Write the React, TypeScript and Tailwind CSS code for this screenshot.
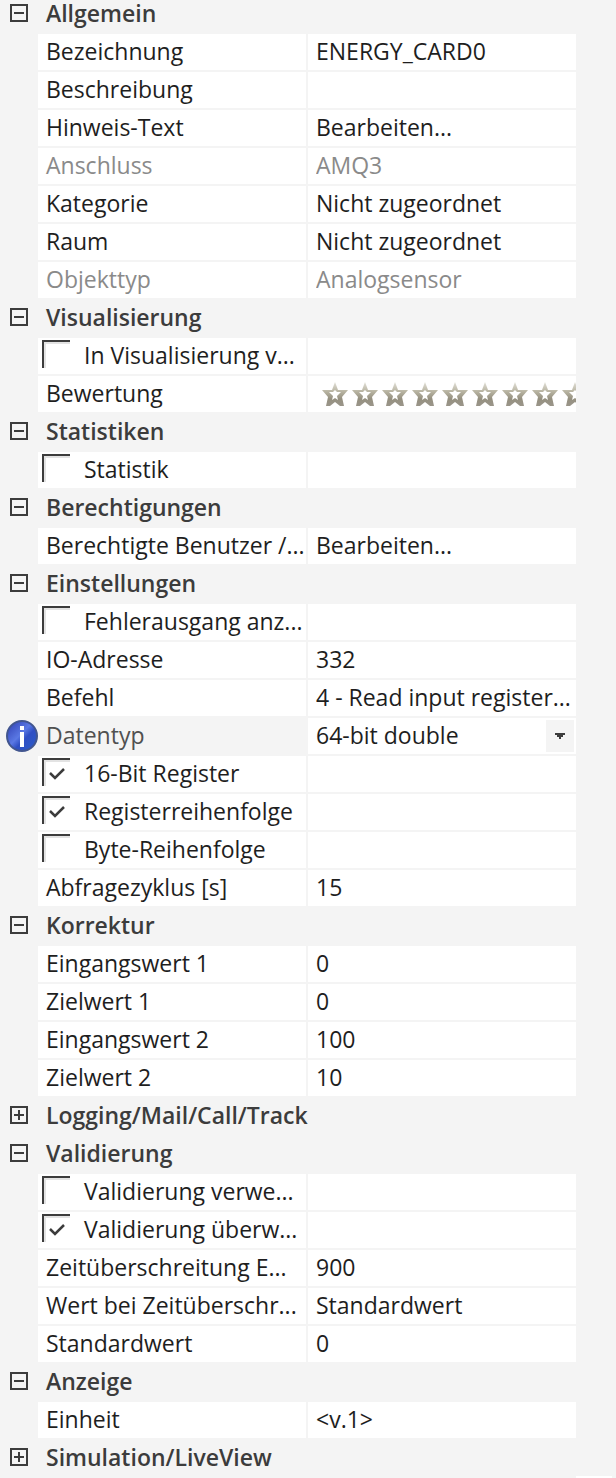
import { useState } from 'react';
import type { ReactNode } from 'react';

type Row = {
  label: string;
  value?: string;
  kind?: 'text' | 'button' | 'select' | 'check' | 'rating';
  checked?: boolean;
  disabled?: boolean;
  active?: boolean;
};

type Section = { title: string; open: boolean; rows: Row[] };

const sections: Section[] = [
  {
    title: 'Allgemein',
    open: true,
    rows: [
      { label: 'Bezeichnung', value: 'ENERGY_CARD0' },
      { label: 'Beschreibung', value: '' },
      { label: 'Hinweis-Text', value: 'Bearbeiten...', kind: 'button' },
      { label: 'Anschluss', value: 'AMQ3', disabled: true },
      { label: 'Kategorie', value: 'Nicht zugeordnet', kind: 'select' },
      { label: 'Raum', value: 'Nicht zugeordnet', kind: 'select' },
      { label: 'Objekttyp', value: 'Analogsensor', disabled: true },
    ],
  },
  {
    title: 'Visualisierung',
    open: true,
    rows: [
      { label: 'In Visualisierung v...', kind: 'check' },
      { label: 'Bewertung', kind: 'rating' },
    ],
  },
  {
    title: 'Statistiken',
    open: true,
    rows: [{ label: 'Statistik', kind: 'check' }],
  },
  {
    title: 'Berechtigungen',
    open: true,
    rows: [{ label: 'Berechtigte Benutzer /...', value: 'Bearbeiten...', kind: 'button' }],
  },
  {
    title: 'Einstellungen',
    open: true,
    rows: [
      { label: 'Fehlerausgang anz...', kind: 'check' },
      { label: 'IO-Adresse', value: '332' },
      { label: 'Befehl', value: '4 - Read input register...', kind: 'select' },
      { label: 'Datentyp', value: '64-bit double', kind: 'select', active: true },
      { label: '16-Bit Register', kind: 'check', checked: true },
      { label: 'Registerreihenfolge', kind: 'check', checked: true },
      { label: 'Byte-Reihenfolge', kind: 'check' },
      { label: 'Abfragezyklus [s]', value: '15' },
    ],
  },
  {
    title: 'Korrektur',
    open: true,
    rows: [
      { label: 'Eingangswert 1', value: '0' },
      { label: 'Zielwert 1', value: '0' },
      { label: 'Eingangswert 2', value: '100' },
      { label: 'Zielwert 2', value: '10' },
    ],
  },
  { title: 'Logging/Mail/Call/Track', open: false, rows: [] },
  {
    title: 'Validierung',
    open: true,
    rows: [
      { label: 'Validierung verwe...', kind: 'check' },
      { label: 'Validierung überw...', kind: 'check', checked: true },
      { label: 'Zeitüberschreitung E...', value: '900' },
      { label: 'Wert bei Zeitüberschr...', value: 'Standardwert', kind: 'select' },
      { label: 'Standardwert', value: '0' },
    ],
  },
  {
    title: 'Anzeige',
    open: true,
    rows: [{ label: 'Einheit', value: '<v.1>' }],
  },
  { title: 'Simulation/LiveView', open: false, rows: [] },
];

function ToggleIcon({ open }: { open: boolean }) {
  return (
    <svg width="18" height="18" viewBox="0 0 18 18" shapeRendering="crispEdges" aria-hidden="true">
      <path d="M1 1h16v16H1z" fill="none" stroke="#3c3c3c" strokeWidth="2" />
      <path d="M4 8h10v2H4z" fill="#3c3c3c" />
      {!open && <path d="M8 4h2v10H8z" fill="#3c3c3c" />}
    </svg>
  );
}

function InfoIcon() {
  return (
    <svg width="32" height="32" viewBox="0 0 32 32" className="shrink-0" role="img" aria-label="Info">
      <defs>
        <linearGradient id="info-fill" x1="0" y1="0" x2="1" y2="1">
          <stop offset="0" stopColor="#2c3cb0" />
          <stop offset="0.45" stopColor="#5a78e4" />
          <stop offset="0.6" stopColor="#2f4fc4" />
          <stop offset="1" stopColor="#2a5cc8" />
        </linearGradient>
      </defs>
      <circle cx="16" cy="16" r="15" fill="url(#info-fill)" stroke="#42568f" strokeWidth="2" />
      <path d="M14 6h4v4h-4zM14 12h4v15h-4z" fill="#fff" />
    </svg>
  );
}

function Star() {
  return (
    <svg width="26" height="24" viewBox="0 0 26 24" className="shrink-0" aria-hidden="true">
      <defs>
        <linearGradient id="star-fill" x1="0" y1="0" x2="0" y2="1">
          <stop offset="0" stopColor="#e2e0d8" />
          <stop offset="0.4" stopColor="#b8b4a2" />
          <stop offset="0.7" stopColor="#959080" />
          <stop offset="1" stopColor="#9a958a" />
        </linearGradient>
      </defs>
      <path
        d="M13 0l3 8h10l-6 7 2 9h-4l-5-4-5 4H4l2-9-6-7h10zM7 10l4 4-1 4 3-2 3 2-1-4 4-4h-4l-2-2-2 2z"
        fill="url(#star-fill)"
        fillRule="evenodd"
      />
    </svg>
  );
}

function Rating() {
  const [stars, setStars] = useState(0);
  return (
    <div className="flex gap-1 overflow-hidden pl-3.5">
      {Array.from({ length: 10 }, (_, i) => (
        <button
          key={i}
          type="button"
          className="shrink-0"
          aria-label={`${i + 1} / 10`}
          aria-pressed={i < stars}
          onClick={() => setStars(i + 1)}
        >
          <Star />
        </button>
      ))}
    </div>
  );
}

function Checkbox({ id, checked }: { id: string; checked?: boolean }) {
  return (
    <span className="grid size-7 shrink-0">
      <input
        id={id}
        type="checkbox"
        defaultChecked={checked}
        className="peer col-start-1 row-start-1 size-7 appearance-none border-t-2 border-l-2 border-[#3c3c3c] shadow-[inset_2px_2px_0_#e3e3e3]"
      />
      <svg
        viewBox="0 0 28 28"
        className="pointer-events-none invisible col-start-1 row-start-1 size-7 peer-checked:visible"
        aria-hidden="true"
      >
        <path d="M8 15l5 5 9-9" fill="none" stroke="#3c3c3c" strokeWidth="2.500" />
      </svg>
    </span>
  );
}

function Value({ id, row }: { id: string; row: Row }) {
  switch (row.kind) {
    case 'check':
      return null;
    case 'rating':
      return <Rating />;
    case 'button':
      return (
        <button id={id} type="button" className="h-9 w-full pb-0.5 pl-2 text-left">
          {row.value}
        </button>
      );
    case 'select':
      return (
        <>
          <select id={id} className="h-9 w-full min-w-0 appearance-none pb-0.5 pl-2 outline-none">
            <option>{row.value}</option>
          </select>
          {row.active && (
            <span className="pointer-events-none mr-0.5 flex h-8 w-7 shrink-0 items-center justify-center bg-[#f4f4f4]">
              <svg width="10" height="6" viewBox="0 0 10 6" shapeRendering="crispEdges" aria-hidden="true">
                <path d="M0 0h10v2H8v2H6v2H4V4H2V2H0z" fill="#3c3c3c" />
              </svg>
            </span>
          )}
        </>
      );
    default:
      return (
        <input
          id={id}
          type="text"
          defaultValue={row.value}
          disabled={row.disabled}
          className="h-9 w-full min-w-0 pb-0.5 pl-2 outline-none"
        />
      );
  }
}

function PropertyRow({ id, row }: { id: string; row: Row }) {
  let tone = 'bg-white text-[#1e1e1e]';
  if (row.disabled) tone = 'bg-white text-[#8a8a8a]';
  if (row.active) tone = 'text-[#505050]';

  return (
    <div className="grid h-9 grid-cols-[36px_1fr_1fr_38px] gap-x-0.5">
      <div className="flex items-center pl-1.5">{row.active && <InfoIcon />}</div>
      <div className={`flex min-w-0 items-center overflow-hidden whitespace-nowrap ${tone}`}>
        {row.kind === 'check' ? (
          <label htmlFor={id} className="flex h-9 items-start gap-3.5 pl-1">
            <span className="flex h-8 items-center">
              <Checkbox id={id} checked={row.checked} />
            </span>
            {row.label}
          </label>
        ) : (
          <label htmlFor={id} className="h-9 pl-2">
            {row.label}
          </label>
        )}
      </div>
      <div
        className={`flex min-w-0 items-center overflow-hidden bg-white whitespace-nowrap ${
          row.disabled ? 'text-[#8a8a8a]' : 'text-[#1e1e1e]'
        }`}
      >
        <Value id={id} row={row} />
      </div>
    </div>
  );
}

function PropertySection({ title, open: initial, children }: { title: string; open: boolean; children?: ReactNode }) {
  const [open, setOpen] = useState(initial);
  return (
    <section className="flex flex-col gap-0.5">
      <h2>
        <button
          type="button"
          aria-expanded={open}
          onClick={() => setOpen(!open)}
          className="flex h-8 w-full items-center gap-[18px] pb-1.5 pl-2.5 text-left leading-6 font-semibold text-[#3c3c3c]"
        >
          <ToggleIcon open={open} />
          {title}
        </button>
      </h2>
      {open && children}
    </section>
  );
}

export default function App() {
  return (
    <main className="bg-[#f4f4f4] font-['Open_Sans',sans-serif] text-[23px] leading-[34px]">
      <div className="flex flex-col gap-1.5">
        {sections.map((section, s) => (
          <PropertySection key={section.title} title={section.title} open={section.open}>
            {section.rows.map((row, r) => (
              <PropertyRow key={row.label} id={`prop-${s}-${r}`} row={row} />
            ))}
          </PropertySection>
        ))}
      </div>
      {/* upper edge of the scrollbar end below the grid */}
      <div className="mr-1 ml-auto h-0.5 w-9 bg-white" />
    </main>
  );
}
